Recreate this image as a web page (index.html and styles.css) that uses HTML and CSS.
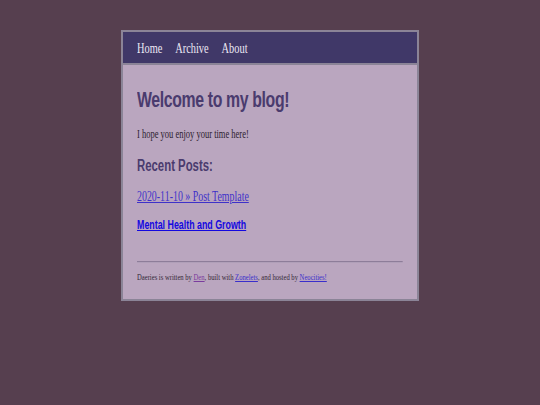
FILE: index.html
```html
<!DOCTYPE html>
<html lang="en">
<head>
<meta charset="utf-8">
<title>Daeries</title>
<link rel="stylesheet" href="styles.css">
</head>
<body>
<div class="frame">
  <header class="header">
    <nav class="squeeze nav">
      <a class="nav-link" href="#">Home</a>
      <a class="nav-link" href="#">Archive</a>
      <a class="nav-link" href="#">About</a>
    </nav>
  </header>
  <main class="content">
    <div class="squeeze">
      <h1 class="title">Welcome to my blog!</h1>
      <p class="intro">I hope you enjoy your time here!</p>
      <h2 class="subtitle">Recent Posts:</h2>
      <p class="post"><a class="post-link" href="#">2020-11-10 » Post Template</a></p>
      <p class="post2"><a class="post-link2" href="#">Mental Health and Growth</a></p>
      <hr class="rule">
      <p class="footer">Daeries is written by <a class="visited" href="#">Den</a>, built with <a class="flink" href="#">Zonelets</a>, and hosted by <a class="flink" href="#">Neocities!</a></p>
    </div>
  </main>
</div>
</body>
</html>
```
FILE: styles.css
```css
html, body {
  margin: 0;
  padding: 0;
  overflow: hidden;
}
body {
  background: #563f4f;
  padding-top: 30px;
  height: 405px;
  box-sizing: border-box;
}
.frame {
  width: 294px;
  margin: 0 auto;
  border: 2px solid #8b8497;
  background: #baa6bf;
}
.header {
  background: #403868;
  height: 31px;
  border-bottom: 2px solid #8b8497;
  padding: 0 14px;
  overflow: hidden;
}
.squeeze {
  width: 138.89%;
  transform: scaleX(0.72);
  transform-origin: 0 0;
}
.nav {
  display: flex;
  gap: 18px;
  height: 31px;
  align-items: center;
  padding-top: 1px;
  box-sizing: border-box;
}
.nav-link {
  font-family: "Liberation Serif", serif;
  font-size: 14.4px;
  line-height: 30px;
  color: #ece8f4;
  text-decoration: none;
}
.content {
  padding: 22px 14px 16px;
  overflow: hidden;
}
.title {
  margin: 0;
  font-family: "Liberation Sans", Arial, sans-serif;
  font-weight: bold;
  font-size: 22px;
  letter-spacing: -0.5px;
  line-height: 25px;
  color: #4a3b6e;
}
.intro {
  margin: 15px 0 0;
  font-family: "Liberation Serif", serif;
  font-size: 11.8px;
  line-height: 14px;
  color: #2e2230;
}
.subtitle {
  margin: 16px 0 0;
  font-family: "Liberation Sans", Arial, sans-serif;
  font-weight: bold;
  font-size: 15.8px;
  line-height: 18px;
  color: #4a3b6e;
}
.post {
  margin: 14px 0 0;
  font-family: "Liberation Serif", serif;
  font-size: 13.75px;
  line-height: 16px;
}
.post-link {
  color: #3e31c9;
}
.post2 {
  margin: 13px 0 0;
  font-family: "Liberation Sans", Arial, sans-serif;
  font-weight: bold;
  font-size: 12.3px;
  line-height: 15px;
}
.post-link2 {
  color: #1408e0;
}
.rule {
  margin: 28px 0 0;
  height: 0;
  border: 0;
  border-top: 1px solid #8d7d99;
  border-bottom: 1px solid #b09fb8;
}
.footer {
  margin: 9px 0 0;
  font-family: "Liberation Serif", serif;
  font-size: 9.2px;
  line-height: 11px;
  color: #352838;
}
.visited {
  color: #7a3c9e;
}
.flink {
  color: #3a2ecb;
}
```
